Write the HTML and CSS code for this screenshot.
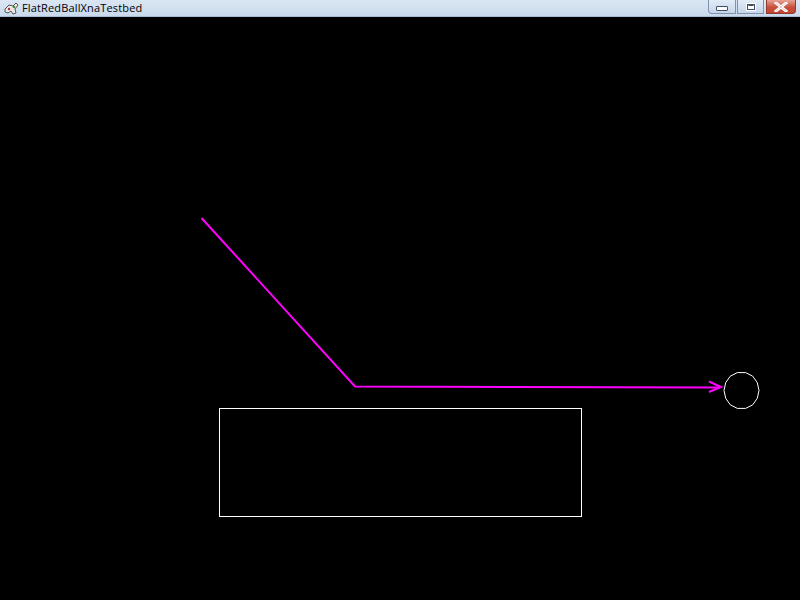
FILE: index.html
```html
<!DOCTYPE html>
<html>
<head>
<meta charset="utf-8">
<link rel="stylesheet" href="styles.css">
</head>
<body>
<div class="window">
  <div class="titlebar">
    <svg class="appicon" width="16" height="16" viewBox="0 0 16 16">
      <path d="M2 9 L6 5 L10 6 L13 3 L15 5 L12 9 L13 13 L10 14 L8 11 L5 13 L2 12 Z" fill="#e8e8e8" stroke="#555" stroke-width="1"/>
      <circle cx="11" cy="7" r="1.2" fill="#3a8a3a"/>
      <circle cx="6" cy="9" r="1.2" fill="#b03030"/>
    </svg>
    <span class="title">FlatRedBallXnaTestbed</span>
    <div class="buttons">
      <div class="btn min"><span class="minbar"></span></div>
      <div class="btn max"><span class="maxbox"></span></div>
      <div class="btn close">
        <svg width="14" height="10" viewBox="0 0 14 10">
          <path d="M2 1 L12 9 M12 1 L2 9" stroke="#fff" stroke-width="3" stroke-linecap="square"/>
          <path d="M2 1 L12 9 M12 1 L2 9" stroke="#7a3a30" stroke-width="0.6" fill="none" opacity="0.4"/>
        </svg>
      </div>
    </div>
  </div>
  <div class="canvas">
    <svg width="800" height="583" viewBox="0 17 800 583" shape-rendering="crispEdges">
      <polyline points="201.5,218 355,386.5 720,387.5" fill="none" stroke="#ff00ff" stroke-width="2" shape-rendering="auto"/>
      <polyline points="709,381.5 721,387 709,392" fill="none" stroke="#ff00ff" stroke-width="2" shape-rendering="auto"/>
      <polygon points="759,390.5 757.3,398.3 752.7,404.8 745.7,408.4 737.3,408.4 730.3,404.8 725.7,398.3 724,390.5 725.7,382.7 730.3,376.2 737.3,372.6 745.7,372.6 752.7,376.2 757.3,382.7" fill="none" stroke="#fff" stroke-width="1" shape-rendering="auto"/>
      <rect x="219.5" y="408.5" width="362" height="108" fill="none" stroke="#fff" stroke-width="1"/>
    </svg>
  </div>
</div>
</body>
</html>
```
FILE: styles.css
```css
html, body {
  margin: 0;
  padding: 0;
  background: #000;
  overflow: hidden;
}
.window {
  width: 800px;
  height: 600px;
  display: flex;
  flex-direction: column;
}
.titlebar {
  height: 16px;
  flex: none;
  display: flex;
  align-items: center;
  background: linear-gradient(#dbe6f3, #c9d9ec);
  border-bottom: 1px solid #a7bbd3;
  position: relative;
}
.appicon {
  margin-left: 3px;
  width: 16px;
  height: 16px;
}
.title {
  margin-left: 3px;
  font-family: "Open Sans", "DejaVu Sans", sans-serif;
  font-size: 11px;
  color: #000;
  line-height: 16px;
  letter-spacing: 0.15px;
}
.buttons {
  margin-left: auto;
  margin-right: 4px;
  display: flex;
  align-self: flex-start;
  gap: 1px;
}
.btn {
  height: 14px;
  border: 1px solid #7f93ae;
  border-top: none;
  display: flex;
  align-items: center;
  justify-content: center;
  box-sizing: border-box;
}
.min {
  width: 28px;
  background: linear-gradient(#e3ecf7, #c5d5ea);
  border-radius: 0 0 0 4px;
}
.max {
  width: 27px;
  background: linear-gradient(#e3ecf7, #c5d5ea);
}
.close {
  width: 30px;
  margin-left: 1px;
  background: linear-gradient(#e8a394, #c8503c 55%, #c24631);
  border-color: #8e3a2c;
  border-radius: 0 0 4px 0;
}
.minbar {
  width: 10px;
  height: 3px;
  border: 1px solid #3f4e63;
  background: #fff;
  margin-top: 4px;
  border-radius: 1px;
}
.maxbox {
  width: 8px;
  height: 6px;
  border: 1px solid #3f4e63;
  background: #fff;
  box-sizing: border-box;
  outline: 1px solid #fff;
  position: relative;
}
.maxbox::after {
  content: "";
  position: absolute;
  left: 1px;
  top: 1px;
  width: 4px;
  height: 2px;
  border: 1px solid #3f4e63;
  box-sizing: content-box;
  left: 0;
  top: 0;
  width: 4px;
  height: 1px;
  border-color: transparent;
  border-top-color: #3f4e63;
}
.canvas {
  flex: 1;
  background: #000;
}
.canvas svg {
  display: block;
}
```
